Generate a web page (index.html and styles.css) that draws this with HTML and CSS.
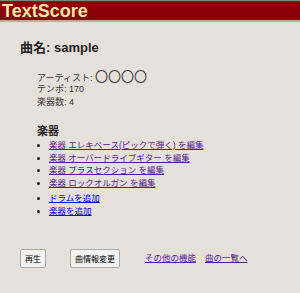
FILE: index.html
```
<!DOCTYPE html>
<html>
<head>
	<title>TextScore</title>
	<link rel="stylesheet" href="styles.css">
</head>
<body>

	<div class="title-bar">
		<h1>TextScore</h1>
	</div>

	<div class="content">
		<h2>曲名: sample</h2>

		<div class="info">
			<div>アーティスト: <span class="artist">〇〇〇〇</span></div>
			<div>テンポ: 170</div>
			<div>楽器数: 4</div>
		</div>

		<h3>楽器</h3>
		<ul class="parts">
			<li><a class="seen" href="#">楽器 エレキベース(ピックで弾く) を編集</a></li>
			<li><a class="seen" href="#">楽器 オーバードライブギター を編集</a></li>
			<li><a class="seen" href="#">楽器 ブラスセクション を編集</a></li>
			<li><a class="seen" href="#">楽器 ロックオルガン を編集</a></li>
		</ul>
		<ul class="parts add">
			<li><a href="#">ドラムを追加</a></li>
			<li><a href="#">楽器を追加</a></li>
		</ul>

		<div class="actions">
			<button>再生</button>
			<button>曲情報変更</button>
			<a class="seen" href="#">その他の機能</a>
			<a class="seen" href="#">曲の一覧へ</a>
		</div>
	</div>

</body>
</html>
```

FILE: styles.css
```
	body{
		margin: 0;
		background-color: #e6e0da;
		font-family: "Liberation Sans", "Noto Sans CJK JP", sans-serif;
		color: #222;
	}

	.title-bar{
		background-color: #8c0008;
		border-top: 1px solid #8a8080;
		border-bottom: 2px solid #e29a9a;
		height: 19px;
	}

	.title-bar h1{
		margin: 0;
		padding-left: 2px;
		font-size: 18px;
		line-height: 20px;
		color: #f4e6a6;
	}

	.content{
		padding: 18px 20px 0;
	}

	h2{
		margin: 0 0 14px;
		font-size: 13px;
		line-height: 16px;
	}

	.info{
		margin-left: 17px;
		font-size: 9px;
		line-height: 13px;
		color: #333;
	}

	.info div{
		height: 13px;
	}

	.artist{
		font-size: 13px;
		line-height: 13px;
	}

	h3{
		margin: 15px 0 1px 17px;
		font-size: 11px;
		line-height: 14px;
	}

	.parts{
		margin: 0;
		padding-left: 29px;
		font-size: 8.5px;
		line-height: 12.5px;
	}

	.add{
		margin-top: 3px;
	}

	a{
		color: #0000ee;
	}

	a.seen{
		color: #551a8b;
	}

	.actions{
		margin-top: 32px;
		display: flex;
		align-items: center;
		font-size: 8.5px;
	}

	.actions button{
		font-family: inherit;
		font-size: 8px;
		padding: 3px 4px;
		margin-right: 24px;
		background: #f2f2f2;
		border: 1px solid #aaa;
		border-radius: 2px;
	}

	.actions button + button{
		margin-right: 25px;
	}

	.actions a{
		margin-right: 9px;
		margin-top: -4px;
	}
```
